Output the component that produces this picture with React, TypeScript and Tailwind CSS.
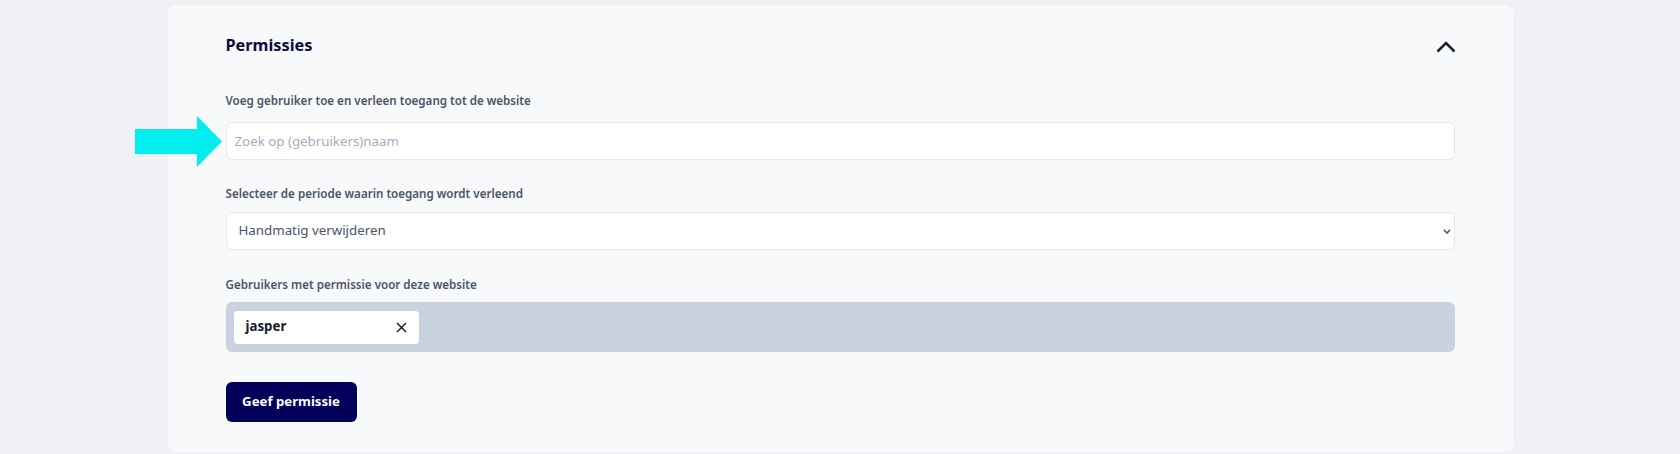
import React, { useState } from 'react';

function ChevronUp() {
  return (
    <svg width="20" height="12" viewBox="0 0 20 12" fill="none">
      <path d="M1.5 10.5L10 2L18.5 10.5" stroke="#1a202c" strokeWidth="2.6" />
    </svg>
  );
}

function CloseIcon() {
  return (
    <svg width="11" height="11" viewBox="0 0 11 11" fill="none">
      <path d="M1 1L10 10M10 1L1 10" stroke="#1a202c" strokeWidth="1.5" />
    </svg>
  );
}

export default function App() {
  const [users, setUsers] = useState<string[]>(['jasper']);
  const [period, setPeriod] = useState('manual');

  return (
    <div className="relative min-h-[454px] bg-[#f0f1f5] pt-[5px] font-['Noto_Sans','Open_Sans',sans-serif]">
      {/* annotation arrow pointing at the search field */}
      <svg className="absolute left-[135px] top-[116px] z-10" width="88" height="51" viewBox="0 0 88 51">
        <polygon points="0,13 62,13 62,0 87,25.5 62,51 62,38 0,38" fill="#00eeee" />
      </svg>

      <div className="mx-auto w-[1345px] rounded-lg bg-[#f8f9fb] px-[58px] pt-[28px] pb-[30px]">
        <div className="flex h-[24px] items-center justify-between">
          <h2 className="text-[16.3px] leading-[24px] font-bold text-[#0d0b3b]">Permissies</h2>
          <button className="-mr-[1px] flex pt-[4px]">
            <ChevronUp />
          </button>
        </div>

        <label className="mt-[36px] block text-[11.6px] leading-[16px] font-semibold text-[#4a5568]">
          Voeg gebruiker toe en verleen toegang tot de website
        </label>
        <input
          className="mt-[13px] block h-[38px] w-full rounded-md border border-[#e2e8f0] bg-white px-[8px] text-[13.3px] text-[#4a5568] outline-none placeholder:text-[#a0aec0]"
          placeholder="Zoek op (gebruikers)naam"
        />

        <label className="mt-[26px] block text-[11.6px] leading-[16px] font-semibold text-[#4a5568]">
          Selecteer de periode waarin toegang wordt verleend
        </label>
        <div className="relative mt-[10px]">
          <select
            value={period}
            onChange={(e) => setPeriod(e.target.value)}
            className="block h-[38px] w-full appearance-none rounded-md border border-[#e2e8f0] bg-white px-[12px] text-[13.3px] text-[#4a5568] outline-none"
          >
            <option value="manual">Handmatig verwijderen</option>
            <option value="week">1 week</option>
            <option value="month">1 maand</option>
          </select>
          <svg className="pointer-events-none absolute right-[4px] top-[17px]" width="8" height="5" viewBox="0 0 8 5" fill="none">
            <path d="M0.8 0.8L4 4L7.2 0.8" stroke="#4a5568" strokeWidth="1.6" />
          </svg>
        </div>

        <label className="mt-[27px] block text-[11.6px] leading-[16px] font-semibold text-[#4a5568]">
          Gebruikers met permissie voor deze website
        </label>
        <div className="mt-[9px] flex h-[50px] items-center gap-2 rounded-md bg-[#cbd2df] px-[8px]">
          {users.map((u) => (
            <div key={u} className="flex h-[33px] w-[185px] items-center justify-between rounded bg-white px-[12px]">
              <span className="text-[13.3px] font-bold text-[#1a202c]">{u}</span>
              <button onClick={() => setUsers(users.filter((x) => x !== u))} className="flex items-center">
                <CloseIcon />
              </button>
            </div>
          ))}
        </div>

        <button className="mt-[30px] flex h-[40px] w-[131px] items-center justify-center rounded-md bg-[#03005a] text-[13.2px] font-bold text-white">
          Geef permissie
        </button>
      </div>
    </div>
  );
}
